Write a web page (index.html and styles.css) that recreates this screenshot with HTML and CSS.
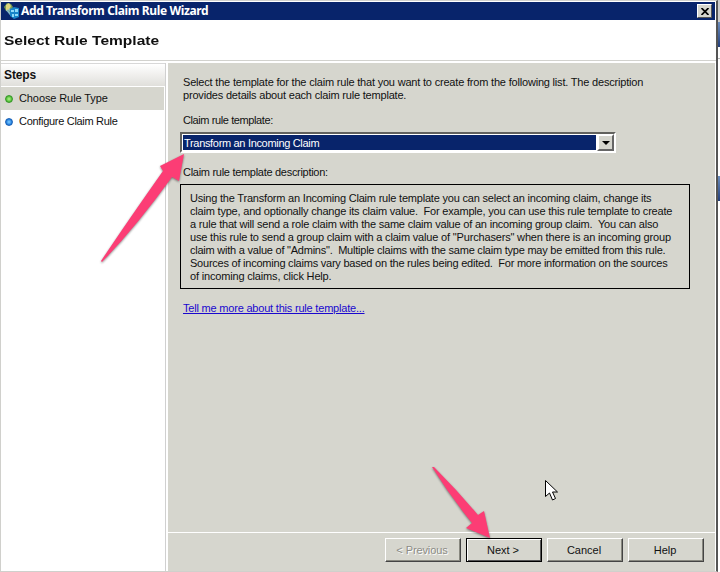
FILE: index.html
```
<!DOCTYPE html>
<html lang="en">
<head>
<meta charset="utf-8">
<title>Add Transform Claim Rule Wizard</title>
<link rel="stylesheet" href="styles.css">
</head>
<body>
<div class="screen">
<main class="window">
  <header class="titlebar">
    <svg class="app-icon" width="18" height="18" viewBox="0 0 18 18">
      <path d="M1 5l3-4 4 1 2 3-3 5-4-1z" fill="#789c55"/>
      <path d="M3 3l3-2 2 3-2 4-3 1z" fill="#ddd47c"/>
      <path d="M4 8l4 5M6 7l4 4" stroke="#7fb5c4" stroke-width="2"/>
      <path d="M7 7l4-2 5 1v9l-5 2-4-3z" fill="#1884c8"/>
      <path d="M8 8h3v2H8zM12 7h3v3h-3zM9 12h2v3H9zM12 12h3v2h-3z" fill="#8ed8f7"/>
    </svg>
    <span class="caption">Add Transform Claim Rule Wizard</span>
    <button class="close" aria-label="Close"><svg width="8" height="7" viewBox="0 0 8 7"><path d="M.5 0l7 7M7.500 0l-7 7" stroke="#000" stroke-width="1.700"/></svg></button>
  </header>
  <h1><span>Select Rule Template</span></h1>
  <div class="body">
    <aside>
      <h2>Steps</h2>
      <div class="step current"><i class="dot green"></i><span>Choose Rule Type</span></div>
      <div class="step"><i class="dot blue"></i><span class="tight">Configure Claim Rule</span></div>
    </aside>
    <section class="page">
      <div class="content">
        <p class="intro">Select the template for the claim rule that you want to create from the following list. The description<br>provides details about each claim rule template.</p>
        <p class="label">Claim rule template:</p>
        <div class="combo"><span class="value">Transform an Incoming Claim</span><button class="drop" aria-label="Open"><i></i></button></div>
        <p class="label second">Claim rule template description:</p>
        <div class="description"><span>Using the Transform an Incoming Claim rule template you can select an incoming claim, change its</span>
<span>claim type, and optionally change its claim value.  For example, you can use this rule template to create</span>
<span>a rule that will send a role claim with the same claim value of an incoming group claim.  You can also</span>
<span class="wide">use this rule to send a group claim with a claim value of "Purchasers" when there is an incoming group</span>
<span class="narrow">claim with a value of "Admins".  Multiple claims with the same claim type may be emitted from this rule.</span>
<span class="narrow">Sources of incoming claims vary based on the rules being edited.  For more information on the sources</span>
<span class="wide">of incoming claims, click Help.</span></div>
        <a class="more" href="#">Tell me more about this rule template...</a>
      </div>
      <footer>
        <button class="btn disabled">&lt; Previous</button>
        <button class="btn default">Next &gt;</button>
        <button class="btn">Cancel</button>
        <button class="btn">Help</button>
      </footer>
    </section>
  </div>
</main>
<div class="behind"></div>
</div>
<svg class="overlay" width="720" height="572" viewBox="0 0 720 572">
  <g class="arrows">
    <path d="M101 261Q127 222 163 171L160 166L184 154L179 181L172 177Q136 227 102 262Z"/>
    <path d="M432 467L434 467Q457 490 478 515L484 511L490 538L466 528L472 523Q450 496 432 467Z"/>
  </g>
  <path d="M545.500 480.500v16l4-3.500 3 7 3-1.500-3-6.500h5z" fill="#fff" stroke="#000"/>
</svg>
</body>
</html>
```
FILE: styles.css
```
* { box-sizing: border-box; }
body { margin: 0; width: 720px; height: 572px; overflow: hidden; background: #fff; color: #111; font: 11px/13px "Liberation Sans", Arial, sans-serif; }
p, h1, h2 { margin: 0; }
button { font: inherit; color: inherit; padding: 0; border-radius: 0; }
.screen { display: flex; height: 572px; }
.window { width: 718px; height: 572px; background: #fff; border: 1px solid #d0d0cc; border-right: 2px solid #555; display: flex; flex-direction: column; }
.titlebar { height: 18px; margin: 1px 1px 0 0; background: #08246b; color: #fff; display: flex; align-items: center; padding: 0 3px 0 2px; flex: none; }
.caption { font: bold 12px/18px "Noto Sans", sans-serif; letter-spacing: -.37px; flex: 1; white-space: nowrap; }
.close { width: 15px; height: 14px; background: #d6d6ce; border: 1px solid; border-color: #fff #555 #555 #fff; display: flex; align-items: center; justify-content: center; }
h1 { height: 41px; flex: none; padding: 0 3px; font: bold 13px/42px "Liberation Sans", sans-serif; border-bottom: 1px solid #d2d2ce; margin-bottom: 2px; white-space: nowrap; }
h1 span { display: inline-block; transform: scaleX(1.195); transform-origin: left; }
.body { flex: 1; display: flex; min-height: 0; }
aside { width: 165px; border-right: 1px solid #d0d0d0; margin-right: 2px; }
h2 { height: 23px; padding-left: 3px; font: bold 12px/23px "Liberation Sans", sans-serif; letter-spacing: -.1px; background: linear-gradient(#fff, #e0dfdb); border-top: 1px solid #d8d8d8; margin-bottom: 1px; }
.step { height: 23px; display: flex; align-items: center; padding-left: 4px; margin-right: 1px; }
.step span { margin-left: 6px; letter-spacing: -.1px; }
.step .tight { letter-spacing: -.3px; }
.current { background: #d6d6ce; }
.dot { width: 8px; height: 8px; border-radius: 50%; }
.green { background: radial-gradient(circle, #a2ee7d 10%, #43b52b 75%); border: 1px solid #36952a; }
.blue { background: radial-gradient(circle, #73c4ff 10%, #1672d5 75%); border: 1px solid #1b61b5; }
.page { flex: 1; background: #d6d6ce; margin-right: 1px; display: flex; flex-direction: column; min-width: 0; }
.content { height: 470px; padding: 13px 0 0 12px; border-bottom: 1px solid #fff; white-space: nowrap; letter-spacing: -.2px; }
.intro { margin-left: 3px; height: 38px; letter-spacing: -.19px; }
.label { margin-left: 3px; height: 18px; letter-spacing: -.4px; }
.combo { width: 436px; height: 21px; border: 2px solid; border-color: #62625e #fff #fff #62625e; display: flex; background: #fff; }
.value { flex: 1; margin: 1px; background: #08246b; color: #fff; line-height: 16px; padding-left: 1px; letter-spacing: -.32px; }
.drop { width: 17px; border: 2px solid; border-color: #fff #666 #666 #fff; background: #d6d6ce; display: grid; place-items: center; }
.drop i { border: 4px solid transparent; border-top-color: #000; border-bottom: 0; }
.label.second { margin-top: 13px; letter-spacing: -.29px; }
.description { width: 510px; height: 105px; border: 1px solid #000; padding: 7px 9px; white-space: pre; }
.wide { letter-spacing: -.17px; }
.narrow { letter-spacing: -.23px; }
.more { display: inline-block; margin: 13px 0 0 3px; color: #1a08ce; }
footer { flex: 1; display: flex; gap: 5px; padding: 5px 0 0 217px; }
.btn { width: 76px; height: 24px; background: #d6d6ce; border: 1px solid; border-color: #fff #444 #444 #fff; box-shadow: inset -1px -1px #88887f; padding-right: 2px; }
.disabled { color: #8c8c86; text-shadow: 1px 1px #fff; letter-spacing: -.1px; }
.default { border: 1px solid #000; box-shadow: inset 1px 1px #fff, inset -1px -1px #555; }
.behind { width: 2px; background: linear-gradient(#ccc 22px, #6b8dbd 22px, #243f7b 47px, #fff 47px 58px, #bbb 58px 59px, #fff 59px 176px, #6b8dbd 176px, #243f7b 201px, #fff 201px); }
.overlay { position: absolute; left: 0; top: 0; pointer-events: none; }
.arrows { fill: #fc3d75; filter: drop-shadow(0 1px 1px #0007); }
```
